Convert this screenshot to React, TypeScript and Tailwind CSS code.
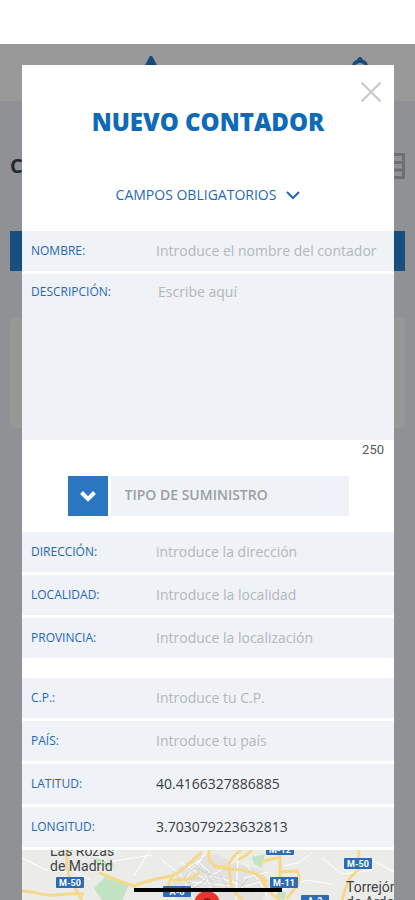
import { useState } from "react";

type Field = {
  id: string;
  label: string;
  placeholder?: string;
  value?: string;
};

const addressFields: Field[] = [
  { id: "direccion", label: "DIRECCIÓN:", placeholder: "introduce la dirección" },
  { id: "localidad", label: "LOCALIDAD:", placeholder: "Introduce la localidad" },
  { id: "provincia", label: "PROVINCIA:", placeholder: "Introduce la localización" },
];

const locationFields: Field[] = [
  { id: "cp", label: "C.P.:", placeholder: "Introduce tu C.P." },
  { id: "pais", label: "PAÍS:", placeholder: "Introduce tu país" },
  { id: "latitud", label: "LATITUD:", value: "40.4166327886885" },
  { id: "longitud", label: "LONGITUD:", value: "3.703079223632813" },
];

const MAX_DESCRIPTION = 250;

function FieldRow({ field }: { field: Field }) {
  const [value, setValue] = useState(field.value ?? "");

  return (
    <div className="flex h-10 items-center bg-[#eff2f7] pl-[9px]">
      <label htmlFor={field.id} className="w-[125px] shrink-0 text-xs text-[#1f68b8]">
        {field.label}
      </label>
      <input
        id={field.id}
        type="text"
        value={value}
        placeholder={field.placeholder}
        onChange={(e) => setValue(e.target.value)}
        className="h-full min-w-0 flex-1 bg-transparent pb-0.5 text-sm text-[#3a3d42] outline-none placeholder:text-[#b4b7bc]"
      />
    </div>
  );
}

// Dimmed page that stays behind the dialog
function PageBehind() {
  return (
    <div className="col-start-1 row-start-1 bg-[#8f9195]">
      <div className="flex h-[57px] justify-between bg-[#999999] pl-[143px] pr-[46px] pt-3">
        <svg viewBox="0 0 16 20" className="h-5 w-4" fill="#144b7c">
          <path d="M7 0h2l6 11v9H1v-9Z" />
        </svg>
        <svg viewBox="0 0 18 20" className="h-5 w-[18px]" fill="#144b7c">
          <path d="M9 1c1.500 0 2.500 1 2.500 2.500C14 4.500 16 6 17 9h-4c-1-1.500-2.500-2-4-2s-3 .5-4 2H1c1-3 3-4.500 5.500-5.500C6.500 2 7.500 1 9 1Z" />
        </svg>
      </div>
      <div className="flex h-[130px] items-center justify-between px-[10px]">
        <span className="text-xl font-bold text-[#25272b]">C</span>
        <svg viewBox="0 0 26 26" className="size-[26px]" fill="none" stroke="#6d6f72" strokeWidth="3">
          <path d="M1.500 1.500h23v23h-23zM1.500 9.500h23M1.500 17h23M9 1.500v23" />
        </svg>
      </div>
      <div className="mx-[10px] h-10 bg-[#174f80]" />
      <div className="mx-[10px] mt-[46px] h-[111px] rounded-sm bg-[#969797]" />
    </div>
  );
}

function RoadSign({ x, y, name }: { x: number; y: number; name: string }) {
  return (
    <g>
      <rect x={x} y={y} width="28" height="11" rx="1" fill="#2d6cb5" />
      <text x={x + 14} y={y + 9} textAnchor="middle" fontSize="9" fontWeight="700" fill="#ffffff">
        {name}
      </text>
    </g>
  );
}

function CityMap() {
  return (
    <svg
      viewBox="0 0 372 50"
      preserveAspectRatio="xMidYMin slice"
      className="min-h-[50px] w-full flex-1 bg-[#ebebe7]"
      fontFamily="Roboto, sans-serif"
      role="img"
      aria-label="Mapa de Madrid"
    >
      <path d="M72 38 83 27l24 8-7 15H80ZM230 7l13-3-3 14-8-4ZM70 8l20 3 2 6-16-2ZM256 40l8 3-2 7-8-2Z" fill="#c3e3c5" />
      <path d="M150 22 172 8l22-4 22 10 24 6 8 14-8 16h-82l-12-14Z" fill="#e2e2e1" />
      <g fill="none" stroke="#ffffff" strokeWidth="1">
        <path d="M0 8 24 20 45 22M48 18l20 12M66 0l20 12 44-7M128 0l-16 26M140 10l20 16 12 24M150 50l20-30 16-20M172 8l20 18 24 8M170 32l40 4M216 4l-2 46M222 28l24-6M250 44l34-14 26 4M262 16l14-3 14-10M300 8l20 16 30-4M350 10l22 12M158 12l14 8 22 22M162 42l30-18 20-12M182 20l8 24M144 40l12-18 24-12M218 38l20-6 8 16M222 12l14 18" />
      </g>
      <g fill="none" stroke="#d0d1d1" strokeWidth="1">
        <path d="M160 30l12-12 14 4M156 42l8-12 14-2 16 12M172 14l14 12 8 14M190 22l-10 12-18 10M200 28l-18-6M160 27l20 18M198 24l8 16M214 30l16 14M226 28l-14 18" />
      </g>
      <g fill="none" stroke="#f5d98a" strokeWidth="3" strokeLinejoin="round">
        <path d="M0 41c14 0 22 6 34 4 10-1 18-2 28-1M46 0c-3 14-1 26 7 38l7 12M77 23c12 4 20 9 35 13 12-5 24-8 38-10 12-5 20-16 30-24M150 26l-4 10M150 30c10 0 20 0 28-8" />
        <path d="M187 0c-2 12 4 18 20 19 14 0 28 2 38 13M219 0c-8 6-14 12-12 19 2 10 0 16 6 24l8 7M207 19c-6-3-6-3-14-2M230 0c-4 4-10 8-14 10M258 0v28M240 12c8-4 14-3 18-5M258 22l17-1c4 6 2 14-4 20l-7 8M337 0v19l-9 9c-4 8-6 14-8 22M238 26c4 10 10 18 20 24" />
      </g>
      <g fontSize="14" fill="#414448">
        <text x="28" y="6">Las Rozas</text>
        <text x="28" y="21">de Madrid</text>
        <text x="324" y="42">Torrejón</text>
        <text x="324" y="57">de Ardoz</text>
      </g>
      <RoadSign x={34} y={27} name="M-50" />
      <RoadSign x={141} y={36} name="A-6" />
      <RoadSign x={244} y={-6} name="M-12" />
      <RoadSign x={248} y={27} name="M-11" />
      <RoadSign x={279} y={45} name="A-2" />
      <RoadSign x={322} y={8} name="M-50" />
      <circle cx="185" cy="54" r="13" fill="#e8362f" />
      <circle cx="185" cy="52" r="4" fill="#8c1613" />
    </svg>
  );
}

export default function App() {
  const [description, setDescription] = useState("");

  return (
    <div className="flex min-h-screen flex-col bg-white font-['Open_Sans',sans-serif]">
      <div className="h-11 shrink-0" />
      <div className="grid flex-1 grid-cols-1">
        <PageBehind />

        <div
          role="dialog"
          aria-labelledby="dialog-title"
          className="col-start-1 row-start-1 ml-[22px] mr-[21px] mt-[21px] flex flex-col bg-white"
        >
          <div className="flex justify-end pr-3 pt-4">
            <button type="button" aria-label="Cerrar">
              <svg viewBox="0 0 22 22" className="size-[22px]" stroke="#c6c8cb" strokeWidth="2">
                <path d="m1.500 1.500 19 19m0-19-19 19" />
              </svg>
            </button>
          </div>

          <h1 id="dialog-title" className="mt-[3px] text-center text-2xl font-extrabold text-[#0f6ab8]">
            NUEVO CONTADOR
          </h1>

          <button
            type="button"
            className="mb-[26px] mt-[47px] flex items-center justify-center gap-[10px] text-sm text-[#1f68b8]"
          >
            CAMPOS OBLIGATORIOS
            <svg viewBox="0 0 14 9" className="h-[9px] w-[14px]" fill="none" stroke="#1f68b8" strokeWidth="2">
              <path d="m1 1 6 6 6-6" />
            </svg>
          </button>

          <div className="flex flex-col gap-[3px]">
            <FieldRow field={{ id: "nombre", label: "NOMBRE:", placeholder: "Introduce el nombre del contador" }} />
            <div className="flex h-[166px] bg-[#eff2f7] pl-[9px] pt-2">
              <label htmlFor="descripcion" className="w-[127px] shrink-0 text-xs leading-5 text-[#1f68b8]">
                DESCRIPCIÓN:
              </label>
              <textarea
                id="descripcion"
                maxLength={MAX_DESCRIPTION}
                value={description}
                placeholder="Escribe aquí"
                onChange={(e) => setDescription(e.target.value)}
                className="min-w-0 flex-1 resize-none bg-transparent text-sm text-[#3a3d42] outline-none placeholder:text-[#b4b7bc]"
              />
            </div>
          </div>
          <p className="pr-[10px] text-right font-[Roboto,sans-serif] text-[13px] leading-5 text-[#55585c]">
            {MAX_DESCRIPTION - description.length}
          </p>

          <div className="mx-auto my-4 flex h-10 w-full max-w-[281px] gap-[3px]">
            <label htmlFor="suministro" className="flex w-10 shrink-0 items-center justify-center bg-[#2a76c1]">
              <svg viewBox="0 0 16 11" className="h-[11px] w-4" fill="none" stroke="#ffffff" strokeWidth="4">
                <path d="m1.500 1.500 6.500 6.500 6.500-6.500" />
              </svg>
            </label>
            <select
              id="suministro"
              aria-label="Tipo de suministro"
              className="min-w-0 flex-1 appearance-none bg-[#eff2f7] px-[14px] pb-0.5 text-sm font-semibold text-[#9b9ea2] outline-none"
            >
              <option>TIPO DE SUMINISTRO</option>
            </select>
          </div>

          <div className="flex flex-col gap-[3px]">
            {addressFields.map((field) => (
              <FieldRow key={field.id} field={field} />
            ))}
          </div>
          <div className="mb-[3px] mt-5 flex flex-col gap-[3px]">
            {locationFields.map((field) => (
              <FieldRow key={field.id} field={field} />
            ))}
          </div>

          <CityMap />
        </div>
      </div>

      {/* phone home indicator */}
      <div className="fixed bottom-2 left-1/2 h-1 w-[148px] -translate-x-1/2 bg-black" />
    </div>
  );
}
